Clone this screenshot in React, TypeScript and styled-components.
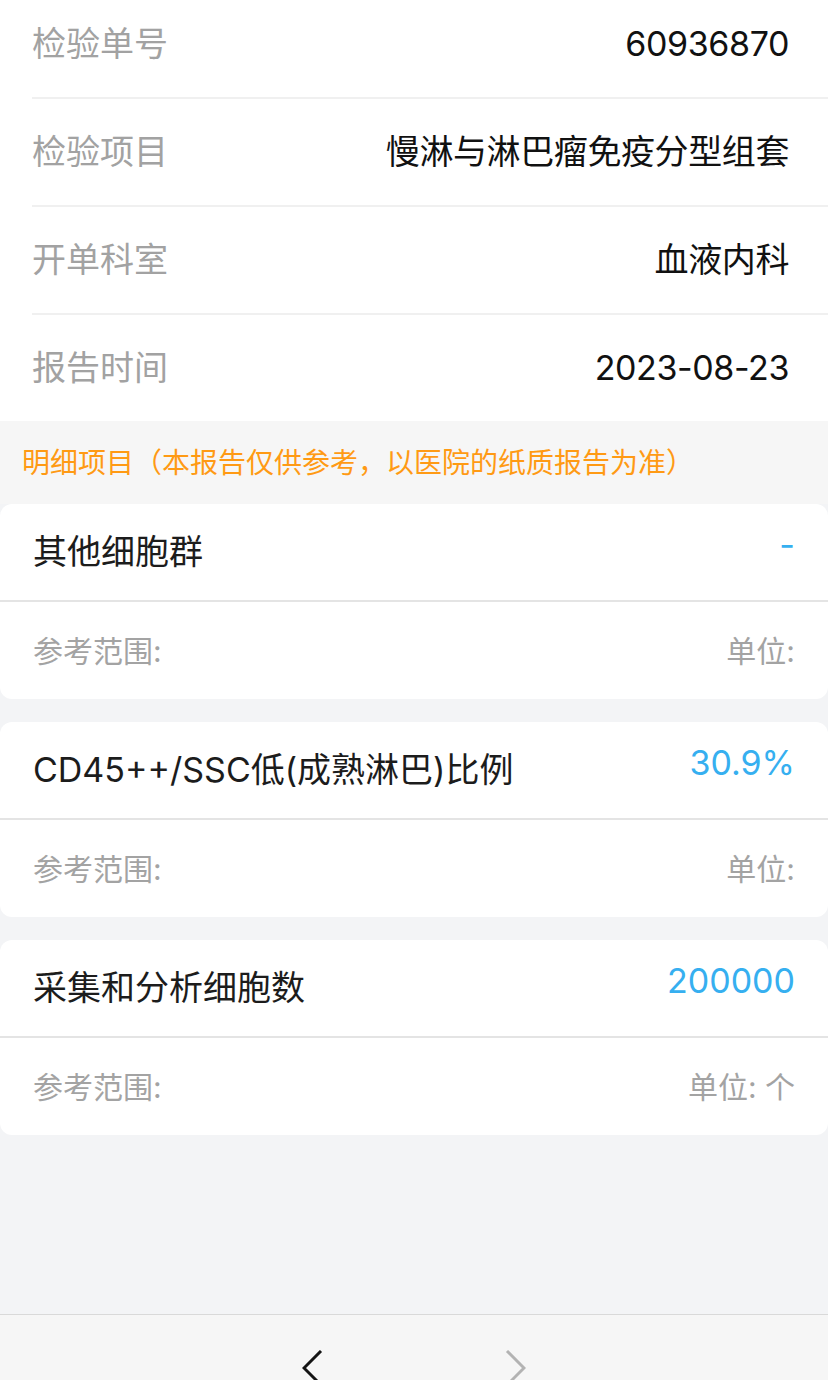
import React from "react";
import styled, { createGlobalStyle } from "styled-components";

const GlobalStyle = createGlobalStyle`
  html, body {
    margin: 0;
    padding: 0;
    background: #f3f4f6;
    overflow: hidden;
  }
  body {
    font-family: "Inter", "Noto Sans CJK SC", sans-serif;
    -webkit-font-smoothing: antialiased;
  }
  * { box-sizing: border-box; }
`;

const Page = styled.div`
  width: 828px;
  display: flex;
  flex-direction: column;
  background: #f3f4f6;
`;

const InfoList = styled.section`
  background: #ffffff;
  margin-top: -9px;
`;

const InfoRow = styled.div<{ $last?: boolean }>`
  margin-left: 32px;
  padding-right: 39px;
  height: ${(p) => (p.$last ? "106px" : "108px")};
  display: flex;
  align-items: center;
  justify-content: space-between;
  border-bottom: ${(p) => (p.$last ? "none" : "2px solid #f0f0f0")};
`;

const InfoLabel = styled.span`
  font-size: 34px;
  color: #a2a2a2;
  line-height: 1;
`;

const InfoValue = styled.span`
  font-size: 34px;
  color: #111111;
  line-height: 1;
  letter-spacing: -0.4px;
`;

const SectionNote = styled.div`
  height: 83px;
  background: #f6f6f6;
  display: flex;
  align-items: center;
  padding-left: 22px;
  font-size: 28px;
  color: #ff9a14;
  line-height: 1;
`;

const CardList = styled.div`
  display: flex;
  flex-direction: column;
  gap: 23px;
  padding-bottom: 179px;
`;

const Card = styled.div`
  background: #ffffff;
  border-radius: 12px;
  overflow: hidden;
`;

const CardHead = styled.div`
  height: 98px;
  padding: 0 33px;
  display: flex;
  align-items: center;
  justify-content: space-between;
  border-bottom: 2px solid #e4e4e4;
`;

const CardTitle = styled.span`
  font-size: 34px;
  color: #1c1c1c;
  line-height: 1;
`;

const CardValue = styled.span`
  font-size: 34px;
  color: #36aff0;
  line-height: 1;
  margin-bottom: 14px;
`;

const CardFoot = styled.div`
  height: 97px;
  padding: 0 33px;
  display: flex;
  align-items: center;
  justify-content: space-between;
  font-size: 30px;
  color: #a3a3a3;
  line-height: 1;
`;

const NavBar = styled.nav`
  height: 110px;
  background: #f6f6f6;
  border-top: 1px solid #d9d9d9;
  display: flex;
  justify-content: center;
  gap: 180px;
  padding-top: 35px;
`;

const NavButton = styled.button<{ $disabled?: boolean }>`
  border: none;
  background: none;
  padding: 0;
  width: 22px;
  height: 40px;
  color: ${(p) => (p.$disabled ? "#b3b3b3" : "#141414")};
  display: flex;
  align-items: flex-start;
  justify-content: center;
`;

const Chevron = ({ dir }: { dir: "left" | "right" }) => (
  <svg width="22" height="40" viewBox="0 0 22 40" fill="none">
    <path
      d={dir === "left" ? "M19 1 L2 18 L19 35" : "M3 1 L20 18 L3 35"}
      stroke="currentColor"
      strokeWidth="3"
      strokeLinecap="butt"
      strokeLinejoin="miter"
    />
  </svg>
);

const info = [
  { label: "检验单号", value: "60936870" },
  { label: "检验项目", value: "慢淋与淋巴瘤免疫分型组套" },
  { label: "开单科室", value: "血液内科" },
  { label: "报告时间", value: "2023-08-23" },
];

const items = [
  { name: "其他细胞群", value: "-", unit: "" },
  { name: "CD45++/SSC低(成熟淋巴)比例", value: "30.9%", unit: "" },
  { name: "采集和分析细胞数", value: "200000", unit: "个" },
];

export default function App() {
  return (
    <>
      <GlobalStyle />
      <Page>
        <InfoList>
          {info.map((row, i) => (
            <InfoRow key={row.label} $last={i === info.length - 1}>
              <InfoLabel>{row.label}</InfoLabel>
              <InfoValue>{row.value}</InfoValue>
            </InfoRow>
          ))}
        </InfoList>
        <SectionNote>明细项目（本报告仅供参考，以医院的纸质报告为准）</SectionNote>
        <CardList>
          {items.map((it) => (
            <Card key={it.name}>
              <CardHead>
                <CardTitle>{it.name}</CardTitle>
                <CardValue>{it.value}</CardValue>
              </CardHead>
              <CardFoot>
                <span>参考范围:</span>
                <span>单位: {it.unit}</span>
              </CardFoot>
            </Card>
          ))}
        </CardList>
        <NavBar>
          <NavButton aria-label="上一页">
            <Chevron dir="left" />
          </NavButton>
          <NavButton aria-label="下一页" $disabled>
            <Chevron dir="right" />
          </NavButton>
        </NavBar>
      </Page>
    </>
  );
}
